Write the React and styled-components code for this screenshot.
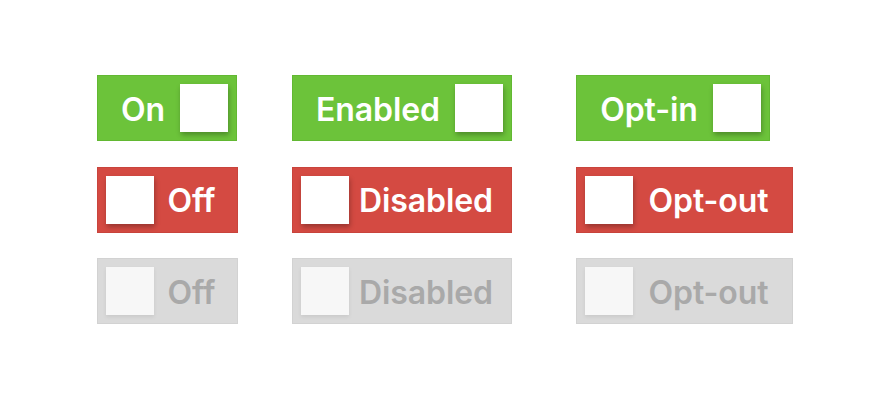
import React from "react";
import styled, { createGlobalStyle } from "styled-components";

const GlobalStyle = createGlobalStyle`
  body {
    margin: 0;
    background: #ffffff;
    font-family: Inter, "Noto Sans", sans-serif;
  }
`;

const palette = {
  on: { bg: "#6cc33a", edge: "#62b832", text: "#ffffff", knob: "#ffffff" },
  off: { bg: "#d44a42", edge: "#c9443c", text: "#ffffff", knob: "#ffffff" },
  disabled: { bg: "#dadada", edge: "#d2d2d2", text: "#a9a9a9", knob: "#f7f7f7" }
};

const rows = [
  [
    { label: "On", state: "on", width: 140 },
    { label: "Enabled", state: "on", width: 220 },
    { label: "Opt-in", state: "on", width: 194 }
  ],
  [
    { label: "Off", state: "off", width: 141 },
    { label: "Disabled", state: "off", width: 220 },
    { label: "Opt-out", state: "off", width: 217 }
  ],
  [
    { label: "Off", state: "disabled", width: 141 },
    { label: "Disabled", state: "disabled", width: 220 },
    { label: "Opt-out", state: "disabled", width: 217 }
  ]
];

const Switch = ({ label, state, width }) => {
  const knobFirst = state !== "on";
  return (
    <StyledSwitch $state={state} style={{ width }}>
      {knobFirst && <Knob $state={state} />}
      <Label $state={state}>{label}</Label>
      {!knobFirst && <Knob $state={state} />}
    </StyledSwitch>
  );
};

const App = () => {
  return (
    <>
      <GlobalStyle />
      <Page>
        {rows.map((row, i) =>
          row.map((item, j) => <Switch key={`${i}-${j}`} {...item} />)
        )}
      </Page>
    </>
  );
};

const Page = styled.main`
  display: grid;
  grid-template-columns: 195px 284px auto;
  grid-auto-rows: 66px;
  row-gap: 25.5px;
  justify-items: start;
  padding: 75px 0 0 97px;
`;

const StyledSwitch = styled.div`
  box-sizing: border-box;
  height: 66px;
  display: flex;
  align-items: center;
  padding: 8px;
  background: ${p => palette[p.$state].bg};
  border: 1px solid ${p => palette[p.$state].edge};
  cursor: ${p => (p.$state === "disabled" ? "default" : "pointer")};
`;

const Label = styled.span`
  flex: 1;
  text-align: center;
  font-size: 32px;
  font-weight: 600;
  letter-spacing: -0.1px;
  line-height: 1;
  color: ${p => palette[p.$state].text};
  padding-top: 3px;
`;

const Knob = styled.div`
  flex: none;
  width: 48px;
  height: 48px;
  background: ${p => palette[p.$state].knob};
  box-shadow: ${p =>
    p.$state === "disabled"
      ? "0 2px 4px rgba(0, 0, 0, 0.08)"
      : "1px 3px 5px rgba(0, 0, 0, 0.28)"};
`;

export default App;
